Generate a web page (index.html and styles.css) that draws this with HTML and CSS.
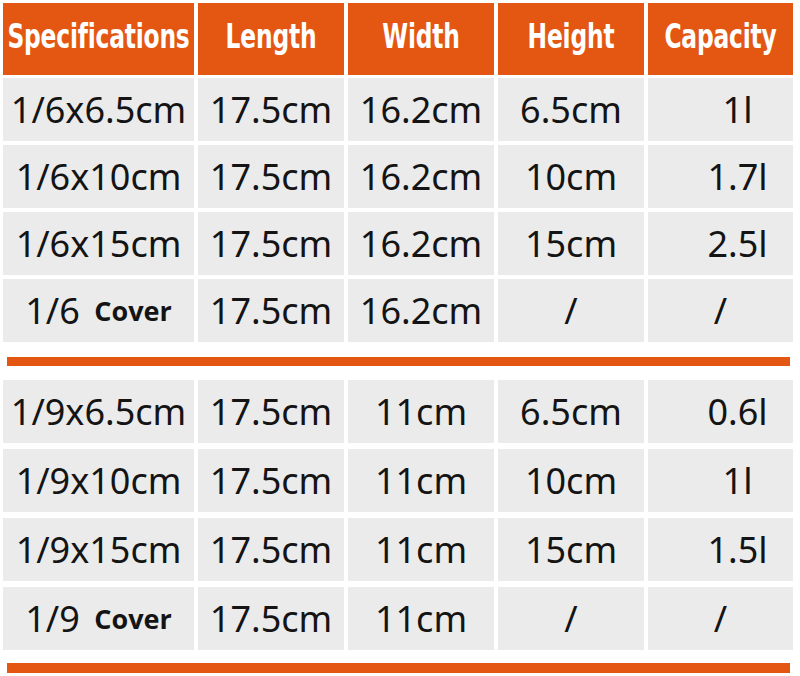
FILE: index.html
```html
<!DOCTYPE html>
<html>
<head>
<meta charset="utf-8">
<link rel="stylesheet" href="styles.css">
</head>
<body>
<div class="sheet">
  <div class="grid head">
    <div class="hcell"><span class="htext">Specifications</span></div>
    <div class="hcell"><span class="htext">Length</span></div>
    <div class="hcell"><span class="htext">Width</span></div>
    <div class="hcell"><span class="htext">Height</span></div>
    <div class="hcell"><span class="htext">Capacity</span></div>
  </div>

  <div class="grid body first">
    <div class="cell">1/6x6.5cm</div><div class="cell">17.5cm</div><div class="cell">16.2cm</div><div class="cell">6.5cm</div><div class="cell cap">1l</div>
    <div class="cell">1/6x10cm</div><div class="cell">17.5cm</div><div class="cell">16.2cm</div><div class="cell">10cm</div><div class="cell cap">1.7l</div>
    <div class="cell">1/6x15cm</div><div class="cell">17.5cm</div><div class="cell">16.2cm</div><div class="cell">15cm</div><div class="cell cap">2.5l</div>
    <div class="cell">1/6 <span class="cover">Cover</span></div><div class="cell">17.5cm</div><div class="cell">16.2cm</div><div class="cell">/</div><div class="cell">/</div>
  </div>

  <div class="bar"></div>

  <div class="grid body second">
    <div class="cell">1/9x6.5cm</div><div class="cell">17.5cm</div><div class="cell">11cm</div><div class="cell">6.5cm</div><div class="cell cap">0.6l</div>
    <div class="cell">1/9x10cm</div><div class="cell">17.5cm</div><div class="cell">11cm</div><div class="cell">10cm</div><div class="cell cap">1l</div>
    <div class="cell">1/9x15cm</div><div class="cell">17.5cm</div><div class="cell">11cm</div><div class="cell">15cm</div><div class="cell cap">1.5l</div>
    <div class="cell">1/9 <span class="cover">Cover</span></div><div class="cell">17.5cm</div><div class="cell">11cm</div><div class="cell">/</div><div class="cell">/</div>
  </div>

  <div class="bar last"></div>
</div>
</body>
</html>
```

FILE: styles.css
```css
html, body {
  margin: 0;
  padding: 0;
  background: #ffffff;
}

.sheet {
  width: 800px;
  height: 676px;
  overflow: hidden;
  padding: 3px 0 0 3px;
  box-sizing: border-box;
}

.grid {
  display: grid;
  grid-template-columns: 191px 146px 146px 146px 145px;
  column-gap: 4px;
}

.head {
  grid-template-rows: 72px;
}

.hcell {
  background: #e35713;
  display: flex;
  align-items: center;
  justify-content: center;
  padding-bottom: 6px;
  box-sizing: border-box;
}

.htext {
  display: inline-block;
  color: #ffffff;
  font-family: "DejaVu Sans Condensed", "DejaVu Sans", sans-serif;
  font-stretch: condensed;
  font-weight: bold;
  font-size: 26px;
  line-height: 1;
  transform: scaleY(1.3);
  letter-spacing: -0.2px;
}

.body .cell {
  background: #ebebeb;
  display: flex;
  align-items: center;
  justify-content: center;
  font-family: "Noto Sans", "Open Sans", sans-serif;
  font-size: 36px;
  color: #141414;
  line-height: 1;
  white-space: pre;
}

.body .cap {
  padding-left: 34px;
}

.first {
  margin-top: 3px;
  grid-template-rows: repeat(4, 63px);
  row-gap: 4px;
}

.second {
  margin-top: 14px;
  grid-template-rows: repeat(4, 63px);
  row-gap: 6px;
}

.cover {
  font-family: "Open Sans", "Noto Sans", sans-serif;
  font-weight: bold;
  font-size: 27px;
  margin-left: 5px;
}

.bar {
  margin: 15px 0 0 4px;
  width: 783px;
  height: 9px;
  background: #e35713;
}

.bar.last {
  margin-top: 13px;
  height: 10px;
}
```
